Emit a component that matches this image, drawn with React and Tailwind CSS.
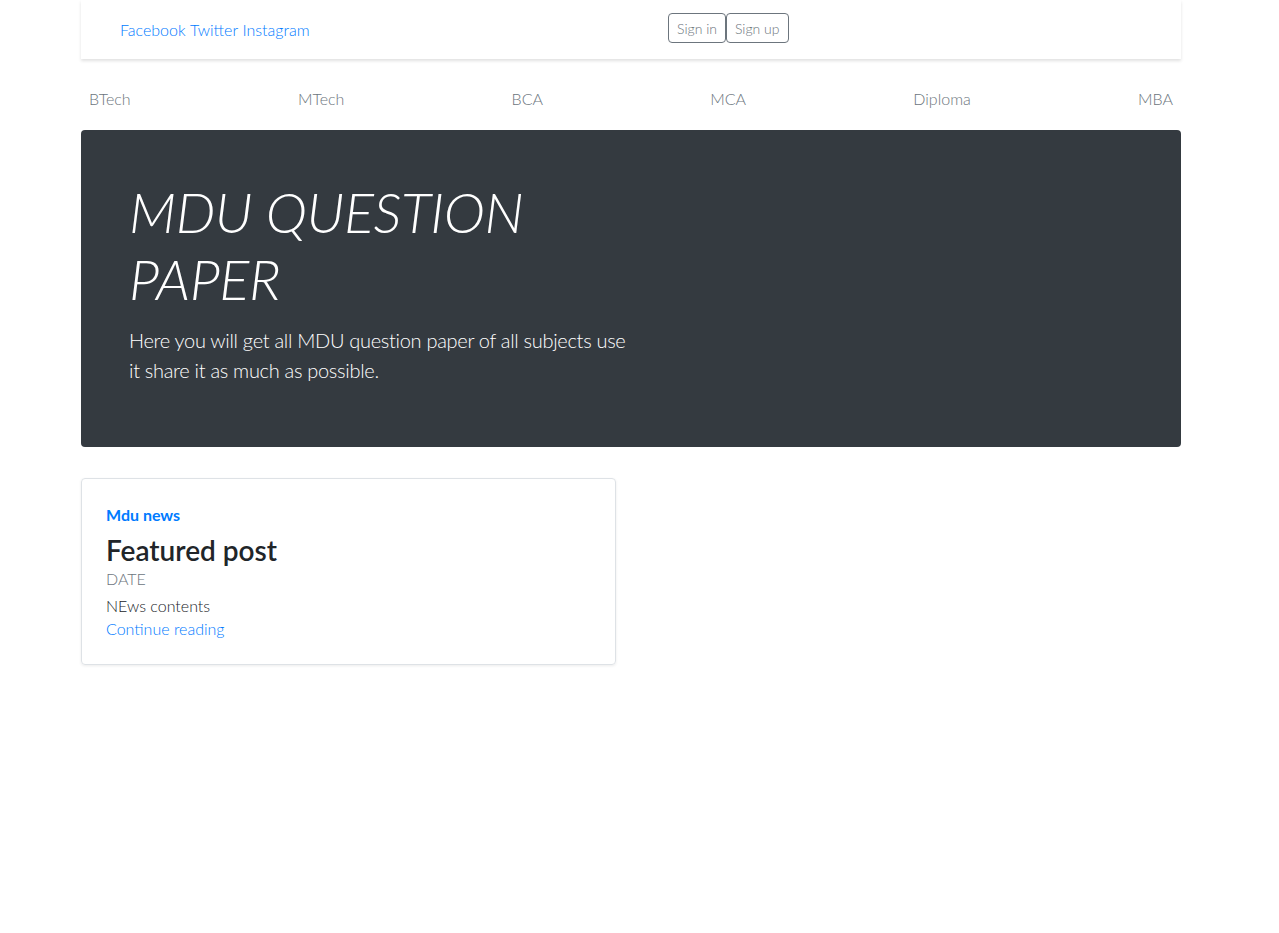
import React from 'react';

const font = { fontFamily: 'Lato, "Open Sans", sans-serif' };

const navItems = ['BTech', 'MTech', 'BCA', 'MCA', 'Diploma', 'MBA'];

const App = () => {
  return (
    <div className="min-h-screen bg-white w-[1262px] font-light text-[#212529]" style={font}>
      <div className="w-[1100px] mx-auto">
        {/* Header */}
        <header className="h-[59px] bg-white shadow-[0_2px_3px_rgba(0,0,0,0.12)] flex items-center pl-[39px]">
          <div className="w-[548px]">
            <a href="#" className="text-[16px] text-[#007bff]">Facebook</a>{' '}
            <a href="#" className="text-[16px] text-[#007bff]">Twitter</a>{' '}
            <a href="#" className="text-[16px] text-[#007bff]">Instagram</a>
          </div>
          <div className="flex -mt-[3px]">
            <button className="h-[30px] px-[8px] text-[14px] text-[#6c757d] border border-[#6c757d] rounded-[4px]">Sign in</button>
            <button className="h-[30px] px-[8px] text-[14px] text-[#6c757d] border border-[#6c757d] rounded-[4px]">Sign up</button>
          </div>
        </header>

        {/* Nav */}
        <nav className="flex justify-between px-[8px] h-[71px] items-center pt-[8px]">
          {navItems.map((item) => (
            <a key={item} href="#" className="text-[16px] text-[#6c757d]">{item}</a>
          ))}
        </nav>

        {/* Jumbotron */}
        <div className="bg-[#343a40] rounded-[4px] px-[48px] pt-[48px] pb-[50px] text-white mb-[31px]">
          <div className="w-[502px]">
            <h1 className="text-[56px] leading-[67px] italic font-light mb-[13px] tracking-[-0.5px]">MDU QUESTION PAPER</h1>
            <p className="text-[20px] leading-[30px] font-light mb-[12px] tracking-[-0.3px] text-white">Here you will get all MDU question paper of all subjects use it share it as much as possible.</p>
          </div>
        </div>

        {/* Card */}
        <div className="w-[535px] border border-[#dee2e6] rounded-[4px] shadow-[0_1px_3px_rgba(0,0,0,0.08)] pt-[24px] px-[24px] pb-[23px]">
          <div className="text-[16px] leading-[24px] font-bold text-[#007bff] mb-[7px]">Mdu news</div>
          <h3 className="text-[28px] leading-[33px] font-semibold text-[#212529]">Featured post</h3>
          <div className="text-[16px] leading-[24px] text-[#6c757d]">DATE</div>
          <p className="text-[16px] leading-[24px] text-[#212529] mt-[3px]">NEws contents</p>
          <a href="#" className="block text-[16px] leading-[24px] text-[#007bff] -mt-[1px]">Continue reading</a>
        </div>
      </div>
    </div>
  );
};

export default App;
